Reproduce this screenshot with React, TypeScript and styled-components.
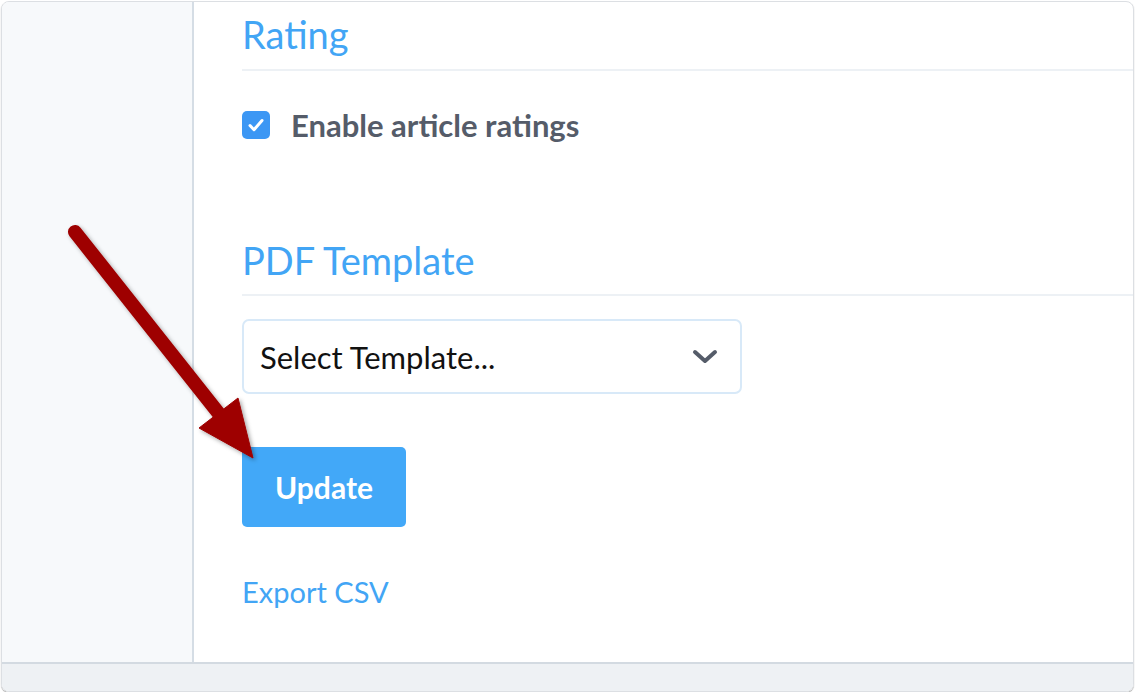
import React from "react"
import styled, { createGlobalStyle } from "styled-components"

const GlobalStyle = createGlobalStyle`
  html, body {
    margin: 0;
    padding: 0;
    background: #ffffff;
    font-family: Lato, "Noto Sans", sans-serif;
  }
  * { box-sizing: border-box; }
`

const Frame = styled.div`
  position: relative;
  margin: 1px 2px 0 1px;
  height: 691px;
  border: 1px solid #dcdfe3;
  border-radius: 8px;
  overflow: hidden;
  display: flex;
  flex-direction: column;
  box-shadow: 0 1px 1px rgba(0, 0, 0, 0.35);
`

const Body = styled.div`
  flex: 1;
  display: flex;
  min-height: 0;
`

const Sidebar = styled.aside`
  width: 192px;
  flex-shrink: 0;
  background: #f7f9fb;
  border-right: 2px solid #d5dde5;
`

const Content = styled.main`
  flex: 1;
  padding-left: 48px;
  display: flex;
  flex-direction: column;
`

const SectionBlock = styled.section<{ $gap: number }>`
  margin-top: ${(p) => p.$gap}px;
`

const SectionTitle = styled.h2`
  margin: 0;
  padding-bottom: 11px;
  font-size: 38px;
  font-weight: 400;
  line-height: 1.2;
  color: #42a5f5;
  border-bottom: 2px solid #edf1f5;
`

const CheckRow = styled.label`
  display: flex;
  align-items: center;
  gap: 21px;
  margin-top: 35px;
  font-size: 31px;
  font-weight: 700;
  color: #555c69;
`

const CheckBox = styled.span`
  width: 28px;
  height: 28px;
  border-radius: 5px;
  background: #3c97f4;
  display: flex;
  align-items: center;
  justify-content: center;
`

const Select = styled.div`
  margin-top: 23px;
  width: 500px;
  height: 75px;
  border: 2px solid #d8e9f8;
  border-radius: 7px;
  display: flex;
  align-items: center;
  justify-content: space-between;
  padding: 0 22px 0 16px;
  font-size: 31px;
  color: #111111;
`

const PrimaryButton = styled.button`
  margin-top: 53px;
  width: 164px;
  height: 80px;
  border: none;
  border-radius: 5px;
  background: #42a8f8;
  color: #ffffff;
  font-family: inherit;
  font-size: 30px;
  font-weight: 700;
  align-self: flex-start;
`

const TextLink = styled.a`
  margin-top: 47px;
  font-size: 29px;
  color: #42a5f5;
  text-decoration: none;
  align-self: flex-start;
`

const Footer = styled.div`
  height: 29px;
  flex-shrink: 0;
  background: #eef1f4;
  border-top: 2px solid #d3dae1;
`

const Annotation = styled.svg`
  position: absolute;
  left: 0;
  top: 0;
  pointer-events: none;
  overflow: visible;
`

function Section({ title, gap, children }: { title: string; gap: number; children: React.ReactNode }) {
  return (
    <SectionBlock $gap={gap}>
      <SectionTitle>{title}</SectionTitle>
      {children}
    </SectionBlock>
  )
}

export default function App() {
  return (
    <>
      <GlobalStyle />
      <Frame>
        <Body>
          <Sidebar />
          <Content>
            <Section title="Rating" gap={10}>
              <CheckRow>
                <CheckBox>
                  <svg width="20" height="20" viewBox="0 0 20 20">
                    <path d="M4 10.5l4 4.2 8-9.2" fill="none" stroke="#fff" strokeWidth="3" strokeLinecap="round" strokeLinejoin="round" />
                  </svg>
                </CheckBox>
                Enable article ratings
              </CheckRow>
            </Section>
            <Section title="PDF Template" gap={94}>
              <Select>
                Select Template...
                <svg width="26" height="16" viewBox="0 0 26 16">
                  <path d="M3 3l10 9 10-9" fill="none" stroke="#555c69" strokeWidth="4" strokeLinecap="round" strokeLinejoin="round" />
                </svg>
              </Select>
            </Section>
            <PrimaryButton>Update</PrimaryButton>
            <TextLink href="#">Export CSV</TextLink>
          </Content>
        </Body>
        <Footer />
      </Frame>
      <Annotation width="1136" height="694">
        <defs>
          <filter id="sh" x="-20%" y="-20%" width="140%" height="140%">
            <feDropShadow dx="2" dy="2" stdDeviation="2" floodColor="#000" floodOpacity="0.35" />
          </filter>
        </defs>
        <g filter="url(#sh)" fill="#9e0000" stroke="#9e0000">
          <line x1="75" y1="232" x2="220" y2="415" strokeWidth="14" strokeLinecap="round" />
          <polygon points="199,428 238,398 253,458" strokeWidth="1" strokeLinejoin="round" />
        </g>
      </Annotation>
    </>
  )
}
